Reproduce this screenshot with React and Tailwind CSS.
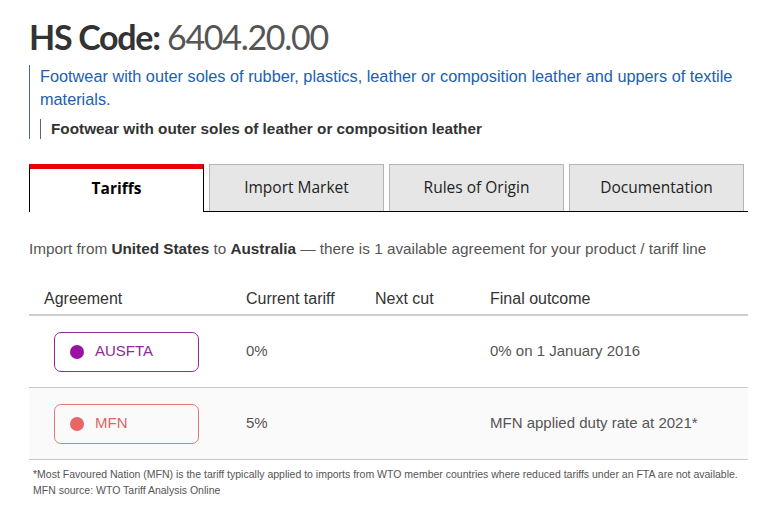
import React from "react";

const tabs = ["Tariffs", "Import Market", "Rules of Origin", "Documentation"];

const rows = [
    {
        name: "AUSFTA",
        pill: "border-[#8e2a94] text-[#8e2a94]",
        dot: "bg-[#9a12a2]",
        current: "0%",
        next: "",
        outcome: "0% on 1 January 2016",
        bg: "bg-white",
    },
    {
        name: "MFN",
        pill: "border-[#e07a7a] text-[#e06464]",
        dot: "bg-[#e86666]",
        current: "5%",
        next: "",
        outcome: "MFN applied duty rate at 2021*",
        bg: "bg-[#fafafa]",
    },
];

const App = () => {
    return (
        <div className="w-[772px] h-[513px] bg-white overflow-hidden font-['Liberation_Sans',Arial,sans-serif]">
            <div className="pl-[29px] pr-[24px] pt-[13px]">
                <h1 className="font-['Lato',sans-serif] text-[34px] leading-[47px] tracking-[-1.3px] text-[#333]">
                    <span className="font-bold">HS Code:</span>{" "}
                    <span className="text-[#555]">6404.20.00</span>
                </h1>

                {/* description hierarchy */}
                <div className="mt-[5px] border-l border-[#4d6b85] pl-[10px] w-[719px]">
                    <p className="text-[16.3px] leading-[23px] text-[#2160b0]">
                        Footwear with outer soles of rubber, plastics, leather or composition leather and uppers of textile materials.
                    </p>
                    <div className="mt-[8px] border-l border-[#4d6b85] pl-[10px]">
                        <p className="text-[15.3px] leading-[20px] font-bold text-[#333]">
                            Footwear with outer soles of leather or composition leather
                        </p>
                    </div>
                </div>

                {/* tabs */}
                <div className="mt-[25px] flex w-[719px] border-b border-black h-[48px]">
                    {tabs.map((t, i) =>
                        i === 0 ? (
                            <div
                                key={t}
                                className="w-[175px] h-[48px] -mb-px pb-[4px] border-t-[5px] border-t-[#e8000b] border-x border-x-black bg-white flex items-center justify-center font-['Open_Sans',sans-serif] font-bold text-[15.5px] text-black"
                            >
                                {t}
                            </div>
                        ) : (
                            <div
                                key={t}
                                className="w-[175px] ml-[5px] h-[47px] border border-b-0 border-[#b5b5b5] bg-[#e6e6e6] flex items-center justify-center font-['Open_Sans',sans-serif] text-[15.5px] text-[#222]"
                            >
                                {t}
                            </div>
                        )
                    )}
                </div>

                <p className="mt-[27px] text-[15.3px] leading-[20px] text-[#555]">
                    Import from <b className="text-[#333]">United States</b> to <b className="text-[#333]">Australia</b> — there is 1 available agreement for your product / tariff line
                </p>

                {/* table */}
                <div className="mt-[24px] w-[719px]">
                    <div className="flex h-[33px] items-center border-b-2 border-[#cfcfcf] text-[16px] text-[#333]">
                        <div className="w-[217px] pl-[15px]">Agreement</div>
                        <div className="w-[129px]">Current tariff</div>
                        <div className="w-[115px]">Next cut</div>
                        <div className="flex-1">Final outcome</div>
                    </div>
                    {rows.map((r) => (
                        <div
                            key={r.name}
                            className={`flex h-[72px] items-center border-b border-[#c8c8c8] text-[15px] text-[#555] ${r.bg}`}
                        >
                            <div className="w-[217px] pl-[25px]">
                                <div className={`w-[145px] h-[40px] rounded-[7px] border flex items-center pl-[15px] gap-[11px] ${r.pill}`}>
                                    <span className={`w-[14px] h-[14px] rounded-full ${r.dot}`} />
                                    <span className="text-[15px]">{r.name}</span>
                                </div>
                            </div>
                            <div className="w-[129px]">{r.current}</div>
                            <div className="w-[115px]">{r.next}</div>
                            <div className="flex-1">{r.outcome}</div>
                        </div>
                    ))}
                </div>

                <div className="mt-[6px] text-[10.5px] leading-[16px] text-[#555] pl-[4px]">
                    <p>*Most Favoured Nation (MFN) is the tariff typically applied to imports from WTO member countries where reduced tariffs under an FTA are not available.</p>
                    <p>MFN source: WTO Tariff Analysis Online</p>
                </div>
            </div>
        </div>
    );
};

export default App;
